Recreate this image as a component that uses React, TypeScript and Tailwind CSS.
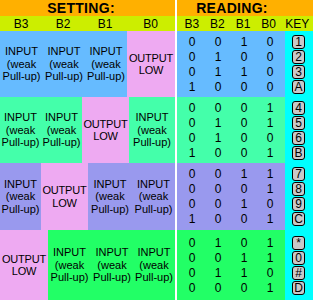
const SECTIONS = [
	{
		bg: "bg-[#66bbff]",
		h: "h-[66px]",
		cols: [
			{ out: false, w: "w-[43px]" },
			{ out: false, w: "w-[42px]" },
			{ out: false, w: "w-[42px]" },
			{ out: true, w: "w-[48px]" },
		],
		rows: [
			["0", "0", "1", "0", "1"],
			["0", "1", "0", "0", "2"],
			["0", "1", "1", "0", "3"],
			["1", "0", "0", "0", "A"],
		],
	},
	{
		bg: "bg-[#44ffaa]",
		h: "h-[66px]",
		cols: [
			{ out: false, w: "w-[41px]" },
			{ out: false, w: "w-[41px]" },
			{ out: true, w: "w-[47px]" },
			{ out: false, w: "w-[46px]" },
		],
		rows: [
			["0", "0", "0", "1", "4"],
			["0", "1", "0", "1", "5"],
			["0", "1", "0", "0", "6"],
			["1", "0", "0", "1", "B"],
		],
	},
	{
		bg: "bg-[#9999ee]",
		h: "h-[67px]",
		cols: [
			{ out: false, w: "w-[41px]" },
			{ out: true, w: "w-[47px]" },
			{ out: false, w: "w-[44px]" },
			{ out: false, w: "w-[43px]" },
		],
		rows: [
			["0", "0", "1", "1", "7"],
			["0", "0", "0", "1", "8"],
			["0", "0", "1", "0", "9"],
			["1", "0", "0", "1", "C"],
		],
	},
	{
		bg: "bg-[#22ff66]",
		h: "flex-1",
		cols: [
			{ out: true, w: "w-[48px]" },
			{ out: false, w: "w-[43px]" },
			{ out: false, w: "w-[42px]" },
			{ out: false, w: "w-[42px]" },
		],
		rows: [
			["0", "1", "0", "1", "*"],
			["0", "0", "1", "1", "0"],
			["0", "1", "1", "0", "#"],
			["0", "0", "0", "1", "D"],
		],
	},
];

export default function App() {
	return (
		<div
			className="flex h-[300px] w-[313px] gap-[2px] bg-white text-black"
			style={{ fontFamily: '"Liberation Sans", Arial, sans-serif' }}
		>
			{/* ── SETTING ── */}
			<div className="flex w-[175px] flex-col">
				<div className="flex h-[16px] items-center justify-center bg-[#ffb000] pr-[13px] text-[14px] font-bold tracking-[0.3px]">
					SETTING:
				</div>
				<div className="flex h-[15px] items-center bg-[#ccee00] text-[12px]">
					<div className="w-[42px] text-center">B3</div>
					<div className="w-[42px] text-center">B2</div>
					<div className="w-[42px] text-center">B1</div>
					<div className="w-[49px] text-center">B0</div>
				</div>
				{SECTIONS.map((s, i) => (
					<div key={i} className={`flex ${s.h}`}>
						{s.cols.map((c, j) => (
							<div
								key={j}
								className={`flex ${c.w} items-center justify-center text-center text-[11px] leading-[12.5px] ${
									c.out ? "bg-[#eeaaf2]" : s.bg
								}`}
							>
								{c.out ? (
									<span className="tracking-[-0.2px]">
										OUTPUT
										<br />
										LOW
									</span>
								) : (
									<span>
										INPUT
										<br />
										(weak
										<br />
										Pull-up)
									</span>
								)}
							</div>
						))}
					</div>
				))}
			</div>

			{/* ── READING ── */}
			<div className="flex w-[136px] flex-col">
				<div className="flex h-[16px] items-center justify-center bg-[#ffb000] pr-[26px] text-[14px] font-bold tracking-[0.3px]">
					READING:
				</div>
				<div className="flex h-[15px] items-center bg-[#ccee00] pl-[2px] text-[12px]">
					<div className="w-[26px] text-center">B3</div>
					<div className="w-[26px] text-center">B2</div>
					<div className="w-[26px] text-center">B1</div>
					<div className="w-[26px] text-center">B0</div>
					<div className="w-[32px] text-center">KEY</div>
				</div>
				{SECTIONS.map((s, i) => (
					<div key={i} className={`flex ${s.h}`}>
						<div className={`flex w-[108px] flex-col justify-center pl-[2px] ${s.bg}`}>
							{s.rows.map((r, k) => (
								<div key={k} className="flex h-[15px] items-center text-[12px]">
									{r.slice(0, 4).map((v, m) => (
										<div key={m} className="w-[26px] text-center">
											{v}
										</div>
									))}
								</div>
							))}
						</div>
						<div className="flex w-[28px] flex-col items-center justify-center bg-[#00ffff] pr-px">
							{s.rows.map((r, k) => (
								<div key={k} className="flex h-[15px] items-center">
									<div className="flex h-[14px] w-[13px] items-center justify-center rounded-[3px] border border-black bg-[#c8c8c8] text-[12px] leading-none">
										{r[4]}
									</div>
								</div>
							))}
						</div>
					</div>
				))}
			</div>
		</div>
	);
}
